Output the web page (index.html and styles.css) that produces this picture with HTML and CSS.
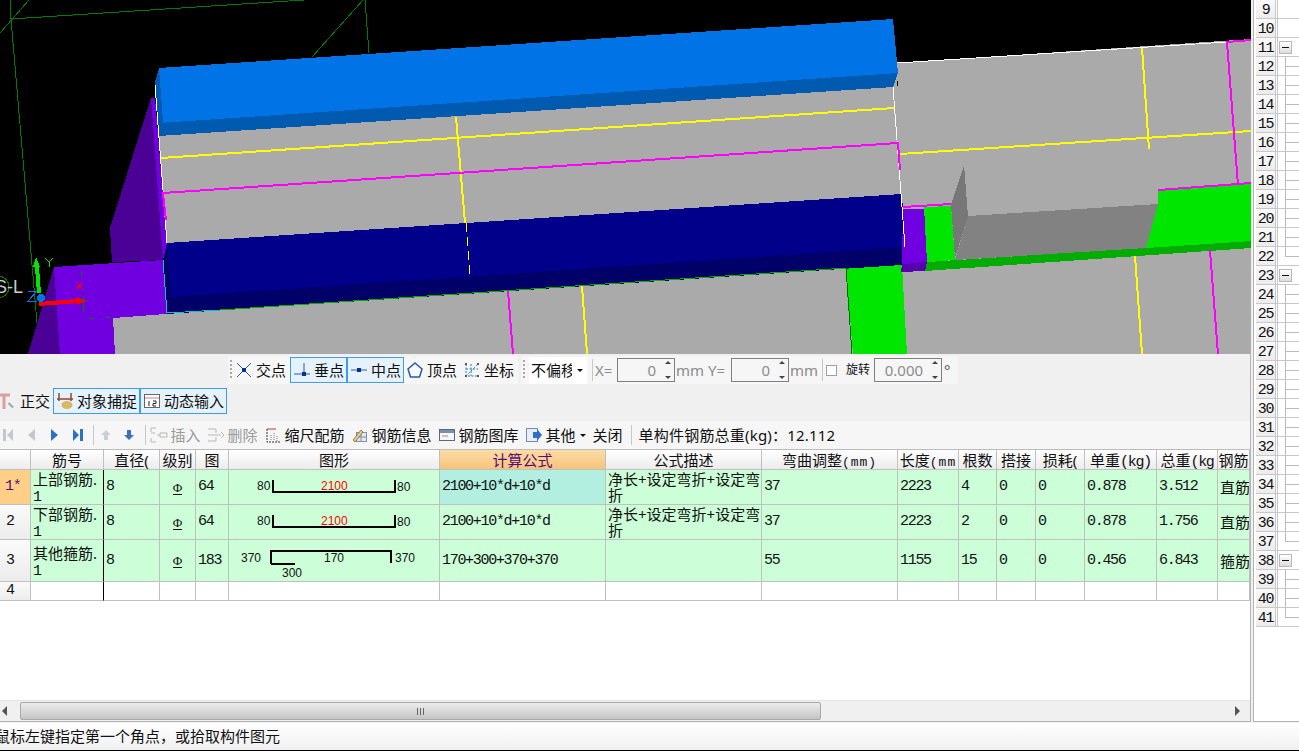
FILE: index.html
```html
<!DOCTYPE html>
<html lang="zh-CN">
<head>
<meta charset="utf-8">
<title>钢筋编辑</title>
<link rel="stylesheet" href="styles.css">
</head>
<body>
<div class="app">
  <main class="left">
    <svg class="view" width="1251" height="354" viewBox="0 0 1251 354" shape-rendering="crispEdges">
      <rect width="1251" height="354" fill="#000"/>
      <g stroke="#007a00" fill="none">
        <path d="M11 19L304 0M10 0L11 19L37 323M29 0L0 33M365 0L369 53M363 0L312 57"/>
        <circle cx="-2" cy="287" r="11"/>
      </g>
      <text x="-5" y="293" class="viewlabel">S-L</text>
      <polygon fill="#4b0096" points="151,98 155,98 167,243 163,260 112,262 110,228"/>
      <polygon fill="#7000e0" points="151,98 155,98 167,243 163,260"/>
      <polygon fill="#4b0096" points="54,267 60,354 28,354"/>
      <polygon fill="#7000e0" points="54,267 163,260 167,314 113,318 115,354 60,354"/>
      <polygon fill="#aaa" points="113,318 166,314 620,283 1251,241 1251,354 115,354"/>
      <polygon fill="#aaa" points="897,63 1251,39 1251,250 903,272"/>
      <polygon fill="#aaa" points="155,85 159,136 893,87 897,73 904,250 167,246"/>
      <polygon fill="#00e600" points="846,268 902,265 907,354 853,354"/>
      <polygon fill="#0073e6" points="159,68 893,19 898,73 163,123"/>
      <polygon fill="#005ab0" points="159,123 898,73 893,87 159,136"/>
      <polygon fill="#005ab0" points="155,82 159,68 163,122 159,136"/>
      <polygon fill="#00008b" points="167,243 902,194 905,247 171,297"/>
      <polygon fill="#000068" points="167,243 171,297 905,247 902,265 167,314 163,260"/>
      <polygon fill="#7000e0" points="903,209 924,209 928,262 902,264"/>
      <polygon fill="#5600ae" points="902,264 928,262 925,271 901,272"/>
      <polygon fill="#00e600" points="924,207 951,206 955,260 927,262"/>
      <polygon fill="#00ad00" points="927,262 1251,241 1251,248 925,271"/>
      <polygon fill="#828282" points="968,216 1158,204 1146,248 955,260"/>
      <polygon fill="#777" points="964,165 968,216 955,258 951,205"/>
      <polygon fill="#00e600" points="1158,190 1251,184 1251,241 1146,248 1158,204"/>
      <g fill="none" stroke-width="1">
        <path stroke="#fff" d="M155 85L167 243M893 87L905 247M897 63L1227 42"/>
        <path stroke="#00c8c8" d="M163 260L167 313L220 310"/>
        <path stroke="#00b000" d="M220 310L620 283L846 268"/>
        <path stroke="#006f00" d="M846 268L852 354"/>
      </g>
      <g fill="none" stroke="#ff0" stroke-width="2">
        <path d="M161 158L894 108M900 154L1251 131M456 117L465 223M1142 48L1149 149M582 286L587 354M1135 256L1142 354"/>
        <path stroke-width="1" stroke-dasharray="9 5" d="M466 223L470 277"/>
      </g>
      <g fill="none" stroke="#ff00ff" stroke-width="2">
        <path d="M166 220L163 193L898 143L900 170M1251 40L1227 42L1238 185M1158 190L1251 183M903 207L951 204M508 291L513 354M1210 250L1218 354"/>
      </g>
      <g fill="none">
        <path stroke="#00e600" stroke-width="4" d="M37 267L39 293"/>
        <polygon fill="#00e600" points="33,267 36,257 40,267"/>
        <path stroke="#ff0000" stroke-width="4" d="M39 304L77 301"/>
        <polygon fill="#ff0000" points="76,297 87,301 76,305"/>
        <circle cx="41" cy="298" r="4" fill="#0073e6"/>
        <path stroke="#0073e6" d="M28 291H37L28 301H37"/>
        <path stroke="#00e600" d="M45 258L49 262L53 258M49 262V267"/>
        <path stroke="#ff0000" d="M76 282L83 290M83 282L76 290"/>
        <path stroke="#007a00" d="M81 272V276M83 296V312M89 318H94M106 317H110"/>
      </g>
    </svg>

    <section class="snap-area">
      <div class="bars-a">
        <div class="bar">
          <span class="grip"></span>
          <span class="tool tool-plain tool-first">
            <svg class="ic" width="18" height="18" viewBox="0 0 18 18"><path d="M2 2L16 16M16 2L2 16" stroke="#2c5aa0" fill="none"/><rect x="7" y="7" width="4" height="4" fill="#00339a"/></svg>
            交点
          </span>
          <span class="tool tool-on tool-snap">
            <svg class="ic" width="18" height="18" viewBox="0 0 18 18"><path d="M11 2V15M1 13H17" stroke="#2c5aa0" fill="none"/><rect x="9" y="11" width="4" height="4" fill="#00339a"/></svg>
            垂点
          </span>
          <span class="tool tool-on tool-snap">
            <svg class="ic" width="18" height="18" viewBox="0 0 18 18"><path d="M1 9H17" stroke="#2c5aa0" fill="none"/><rect x="7" y="7" width="4" height="4" fill="#00339a"/></svg>
            中点
          </span>
          <span class="tool tool-plain tool-tight">
            <svg class="ic" width="18" height="18" viewBox="0 0 18 18"><path d="M9 2L16 8L13.500 16H4.500L2 8Z" stroke="#2c5aa0" stroke-width="1.500" fill="#f6fbff"/></svg>
            顶点
          </span>
          <span class="tool tool-plain tool-tight">
            <svg class="ic" width="18" height="18" viewBox="0 0 18 18"><path d="M3 3V15H16M3 15L15 3M8 3V15M3 8H15" stroke="#2c7ac0" stroke-dasharray="2 1.500" fill="none"/><path d="M2 2h2v2h-2zM14 2h2v2h-2zM2 14h2v2h-2zM14 14h2v2h-2z" fill="#555"/></svg>
            坐标
          </span>
        </div>
        <div class="bar bar-input">
          <span class="grip grip-wide"></span>
          <span class="combo"><span class="combo-text">不偏移</span><span class="caret"></span></span>
          <span class="sep"></span>
          <span class="dim label-x">X=</span>
          <span class="spin"><span class="spin-val">0</span><span class="spin-arrows"><i class="up"></i><i class="down"></i></span></span>
          <span class="dim label-y">mm Y=</span>
          <span class="spin"><span class="spin-val">0</span><span class="spin-arrows"><i class="up"></i><i class="down"></i></span></span>
          <span class="dim label-mm">mm</span>
          <span class="sep"></span>
          <span class="check"></span>
          <span class="rotate">旋转</span>
          <span class="spin spin-wide"><span class="spin-val">0.000</span><span class="spin-arrows"><i class="up"></i><i class="down"></i></span></span>
          <span class="deg">°</span>
        </div>
      </div>
      <div class="bars-b">
        <span class="mode mode-plain">
          <svg class="ic" width="18" height="18" viewBox="0 0 18 18"><path d="M0 3H10M4 3V17" stroke="#d8a0a0" stroke-width="3" fill="none"/><path d="M9 10L14 15L12 16L8 12Z" fill="#9aa8b8"/></svg>
          正交
        </span>
        <span class="mode mode-on">
          <svg class="ic" width="18" height="18" viewBox="0 0 18 18"><path d="M3 1V9M15 1V9M1 7H17" stroke="#8a4a30" stroke-width="1.500" fill="none"/><ellipse cx="11" cy="13" rx="5.500" ry="4" fill="#d8b860"/></svg>
          对象捕捉
        </span>
        <span class="mode mode-on">
          <svg class="ic" width="18" height="18" viewBox="0 0 18 18"><rect x="1.500" y="2.500" width="15" height="13" fill="#fff" stroke="#666"/><path d="M2 6H16" stroke="#c08080"/><path d="M6 9V14M10 9H13V11.500H10V14H13" stroke="#222" fill="none"/></svg>
          动态输入
        </span>
      </div>
    </section>

    <nav class="tb">
      <span class="nav"><svg width="10" height="12" viewBox="0 0 10 12"><path d="M0 0H3V12H0ZM10 0V12L4 6Z" fill="#c4c8cc"/></svg></span>
      <span class="nav"><svg width="8" height="12" viewBox="0 0 8 12"><path d="M8 0V12L1 6Z" fill="#c4c8cc"/></svg></span>
      <span class="nav"><svg width="8" height="12" viewBox="0 0 8 12"><path d="M0 0V12L7 6Z" fill="#2f6fc8"/></svg></span>
      <span class="nav"><svg width="10" height="12" viewBox="0 0 10 12"><path d="M0 0V12L6 6ZM7 0H10V12H7Z" fill="#2f6fc8"/></svg></span>
      <span class="tb-sep tb-sep-a"></span>
      <span class="nav"><svg width="10" height="10" viewBox="0 0 10 10"><path d="M5 0L10 5H7V10H3V5H0Z" fill="#ccd0d4"/></svg></span>
      <span class="nav"><svg width="10" height="10" viewBox="0 0 10 10"><path d="M5 10L10 5H7V0H3V5H0Z" fill="#3a70c0"/></svg></span>
      <span class="tb-sep tb-sep-b"></span>
      <span class="act act-off act-first">
        <svg class="ic" width="18" height="16" viewBox="0 0 18 16"><path d="M1 1H6M1 1V5M1 11V15H6M1 6H5M7 8H10M10 6H17V10H10Z" stroke="#b8b8b8" fill="none"/></svg>
        插入
      </span>
      <span class="act act-off">
        <svg class="ic" width="18" height="16" viewBox="0 0 18 16"><path d="M1 2H9V6M1 14H9V10M1 8H14M14 5L17 8L14 11" stroke="#b8b8b8" fill="none"/></svg>
        删除
      </span>
      <span class="act">
        <svg class="ic" width="18" height="16" viewBox="0 0 18 16"><path d="M3 2V15H16" stroke="#333" stroke-dasharray="2 1" fill="none"/><path d="M3 2H12" stroke="#c04030"/><path d="M7 8V14M10 6V14M13 9V14" stroke="#777" stroke-dasharray="1 1"/></svg>
        缩尺配筋
      </span>
      <span class="act">
        <svg class="ic" width="18" height="16" viewBox="0 0 18 16"><rect x="5.500" y="5.500" width="10" height="9" fill="#e4e8f0" stroke="#8090a8"/><path d="M10 6V14M6 10H15" stroke="#8090a8"/><path d="M2 13L10 3L12 5L4 15Z" fill="#e8d090" stroke="#705020" stroke-width=".7"/></svg>
        钢筋信息
      </span>
      <span class="act">
        <svg class="ic" width="18" height="16" viewBox="0 0 18 16"><rect x="1.500" y="2.500" width="15" height="11" fill="#f4f6fa" stroke="#5a6a80"/><path d="M2 3H16V6H2Z" fill="#7a90b0"/><path d="M4 9H10" stroke="#c09040"/></svg>
        钢筋图库
      </span>
      <span class="act">
        <svg class="ic" width="18" height="16" viewBox="0 0 18 16"><rect x="1.500" y="1.500" width="11" height="13" fill="#e8eef6" stroke="#7a8aa0"/><path d="M8 5H12V2L17 8L12 14V11H8Z" fill="#2f6fc8"/></svg>
        其他<span class="caret caret-more"></span>
      </span>
      <span class="act act-close">关闭</span>
      <span class="tb-sep tb-sep-total"></span>
      <span class="total">单构件钢筋总重(kg)：12.112</span>
    </nav>

    <div class="table-wrap">
      <table class="grid">
        <colgroup>
          <col class="c0"><col class="c1"><col class="c2"><col class="c3"><col class="c4"><col class="c5"><col class="c6"><col class="c7"><col class="c8"><col class="c9"><col class="c10"><col class="c11"><col class="c12"><col class="c13"><col class="c14"><col class="c15">
        </colgroup>
        <thead>
          <tr>
            <th></th><th>筋号</th><th>直径(</th><th>级别</th><th>图</th><th>图形</th><th class="hot">计算公式</th><th>公式描述</th>
            <th>弯曲调整<span class="lat lat-mm">(mm)</span></th><th>长度<span class="lat lat-mm">(mm</span></th><th>根数</th><th>搭接</th><th>损耗(</th><th>单重<span class="lat">(kg)</span></th><th>总重<span class="lat">(kg</span></th><th>钢筋</th>
          </tr>
        </thead>
        <tbody>
          <tr class="r1">
            <th class="rowhead rowhead-on">1*</th><td class="freeze">上部钢筋.<br><span class="lat">1</span></td><td class="n">8</td><td class="g"><span class="grade">Φ</span></td><td class="n">64</td>
            <td class="shape"><svg width="210" height="34" viewBox="0 0 210 34" class="shape-svg"><path d="M44 10V22H166V10" class="bar-line"/><text x="28" y="20" class="dimtxt">80</text><text x="92" y="20" class="dimtxt red">2100</text><text x="168" y="21" class="dimtxt">80</text></svg></td>
            <td class="n formula-on">2100+10*d+10*d</td><td>净长+设定弯折+设定弯<br>折</td><td class="n">37</td><td class="n">2223</td><td class="n">4</td><td class="n">0</td><td class="n">0</td><td class="n">0.878</td><td class="n">3.512</td><td>直筋</td>
          </tr>
          <tr class="r2">
            <th class="rowhead">2</th><td class="freeze">下部钢筋.<br><span class="lat">1</span></td><td class="n">8</td><td class="g"><span class="grade">Φ</span></td><td class="n">64</td>
            <td class="shape"><svg width="210" height="34" viewBox="0 0 210 34" class="shape-svg"><path d="M44 10V22H166V10" class="bar-line"/><text x="28" y="20" class="dimtxt">80</text><text x="92" y="20" class="dimtxt red">2100</text><text x="168" y="21" class="dimtxt">80</text></svg></td>
            <td class="n">2100+10*d+10*d</td><td>净长+设定弯折+设定弯<br>折</td><td class="n">37</td><td class="n">2223</td><td class="n">2</td><td class="n">0</td><td class="n">0</td><td class="n">0.878</td><td class="n">1.756</td><td>直筋</td>
          </tr>
          <tr class="r3">
            <th class="rowhead">3</th><td class="freeze">其他箍筋.<br><span class="lat">1</span></td><td class="n">8</td><td class="g"><span class="grade">Φ</span></td><td class="n">183</td>
            <td class="shape"><svg width="210" height="41" viewBox="0 0 210 41" class="shape-svg"><path d="M42 24V11H162V23M42 24H66" class="bar-line"/><text x="12" y="22" class="dimtxt">370</text><text x="95" y="22" class="dimtxt">170</text><text x="166" y="22" class="dimtxt">370</text><text x="53" y="37" class="dimtxt">300</text></svg></td>
            <td class="n">170+300+370+370</td><td></td><td class="n">55</td><td class="n">1155</td><td class="n">15</td><td class="n">0</td><td class="n">0</td><td class="n">0.456</td><td class="n">6.843</td><td>箍筋</td>
          </tr>
          <tr class="r4">
            <th class="rowhead">4</th><td class="freeze"></td><td></td><td></td><td></td><td></td><td></td><td></td><td></td><td></td><td></td><td></td><td></td><td></td><td></td><td></td>
          </tr>
        </tbody>
      </table>
    </div>

    <div class="hscroll">
      <span class="arrow-l"></span>
      <span class="thumb"><span class="thumb-grip"></span></span>
      <span class="track"></span>
      <span class="arrow-r"></span>
    </div>
  </main>

  <aside class="tree">
    <div class="tr"><span class="no">9</span><span class="tc dot-blue"></span></div>
    <div class="tr"><span class="no">10</span><span class="tc dot"></span></div>
    <div class="tr"><span class="no">11</span><span class="tc dot"><span class="exp"></span></span></div>
    <div class="tr"><span class="no">12</span><span class="tc k"></span></div>
    <div class="tr"><span class="no">13</span><span class="tc k"></span></div>
    <div class="tr"><span class="no">14</span><span class="tc k"></span></div>
    <div class="tr"><span class="no">15</span><span class="tc k"></span></div>
    <div class="tr"><span class="no">16</span><span class="tc k"></span></div>
    <div class="tr"><span class="no">17</span><span class="tc k"></span></div>
    <div class="tr"><span class="no">18</span><span class="tc k"></span></div>
    <div class="tr"><span class="no">19</span><span class="tc k"></span></div>
    <div class="tr"><span class="no">20</span><span class="tc k"></span></div>
    <div class="tr"><span class="no">21</span><span class="tc k"></span></div>
    <div class="tr"><span class="no">22</span><span class="tc k end"></span></div>
    <div class="tr"><span class="no">23</span><span class="tc dot"><span class="exp"></span></span></div>
    <div class="tr"><span class="no">24</span><span class="tc k"></span></div>
    <div class="tr"><span class="no">25</span><span class="tc k"></span></div>
    <div class="tr"><span class="no">26</span><span class="tc k"></span></div>
    <div class="tr"><span class="no">27</span><span class="tc k"></span></div>
    <div class="tr"><span class="no">28</span><span class="tc k"></span></div>
    <div class="tr"><span class="no">29</span><span class="tc k"></span></div>
    <div class="tr"><span class="no">30</span><span class="tc k"></span></div>
    <div class="tr"><span class="no">31</span><span class="tc k"></span></div>
    <div class="tr"><span class="no">32</span><span class="tc k"></span></div>
    <div class="tr"><span class="no">33</span><span class="tc k"></span></div>
    <div class="tr"><span class="no">34</span><span class="tc k"></span></div>
    <div class="tr"><span class="no">35</span><span class="tc k"></span></div>
    <div class="tr"><span class="no">36</span><span class="tc k"></span></div>
    <div class="tr"><span class="no">37</span><span class="tc k end"></span></div>
    <div class="tr"><span class="no">38</span><span class="tc dot"><span class="exp"></span></span></div>
    <div class="tr"><span class="no">39</span><span class="tc k"></span></div>
    <div class="tr"><span class="no">40</span><span class="tc k"></span></div>
    <div class="tr"><span class="no">41</span><span class="tc k end"></span></div>
  </aside>
</div>
<footer class="status"><span class="status-text">鼠标左键指定第一个角点，或拾取构件图元</span></footer>
</body>
</html>
```

FILE: styles.css
```css
* { box-sizing: border-box; }
html, body { margin: 0; padding: 0; }
body {
  width: 1299px;
  height: 751px;
  overflow: hidden;
  background: #f0f0f0;
  color: #111;
  font-family: "Noto Sans", "Noto Sans CJK SC", sans-serif;
  font-size: 15px;
  line-height: 20px;
}
.app { display: grid; grid-template-columns: 1251px 48px; height: 723px; }
.left { display: flex; flex-direction: column; width: 1251px; height: 722px; border-bottom: 1px solid #b4b4b4; border-right: 1px solid #b4b4b4; }
.view { display: block; flex: none; margin-right: -1px; }
.viewlabel { font: 18px "Liberation Sans", sans-serif; fill: #ccc; }
.ic { flex: none; display: block; }

.snap-area { flex: none; height: 67px; background: #f0f0f0; }
.bars-a { display: flex; height: 34px; padding: 2px 0 0 228px; gap: 3px; }
.bar { display: flex; align-items: center; height: 28px; background: #f6f6f6; }
.grip { width: 2px; height: 20px; margin: 0 2px 0 2px; background: repeating-linear-gradient(#a8a8a8 0 2px, transparent 2px 4px); }
.grip-wide { margin-right: 4px; }
.tool { display: flex; align-items: center; height: 26px; gap: 3px; white-space: nowrap; border: 1px solid transparent; }
.tool-plain { padding: 0 3px 0 2px; }
.tool-first { padding-left: 0; }
.tool-tight { padding-left: 1px; }
.tool-on { background: #e5f1fb; border-color: #3d9cf0; }
.tool-snap { width: 57px; padding-left: 2px; }
.bar-input { padding-right: 8px; }
.combo { display: flex; align-items: center; width: 58px; height: 27px; background: #fff; padding-left: 2px; }
.combo-text { width: 41px; flex: none; overflow: hidden; white-space: nowrap; }
.caret { width: 0; height: 0; margin-left: 5px; border: 3px solid transparent; border-top: 3px solid #111; border-bottom: 0; }
.sep { width: 1px; height: 22px; margin: 0 2px 0 5px; background: #c8c8c8; }
.dim { color: #8c8c8c; white-space: nowrap; }
.label-x { width: 22px; }
.label-y { width: 56px; padding-left: 1px; }
.label-mm { width: 28px; padding-left: 1px; }
.spin { display: flex; align-items: center; width: 58px; height: 24px; background: #f6f6f6; border: 1px solid #808080; }
.spin-wide { width: 68px; }
.spin-val { flex: 1; text-align: right; color: #8c8c8c; padding-right: 6px; }
.spin-arrows { display: flex; flex-direction: column; justify-content: space-between; width: 12px; height: 18px; align-items: center; }
.spin-arrows i { width: 0; height: 0; border: 3px solid transparent; }
.spin-arrows .up { border-top: 0; border-bottom: 3px solid #444; }
.spin-arrows .down { border-bottom: 0; border-top: 3px solid #444; }
.check { width: 11px; height: 11px; margin-left: 1px; border: 1px solid #a0a0a0; background: #fff; }
.rotate { width: 28px; margin-left: 9px; font-size: 12px; white-space: nowrap; }
.deg { margin-left: 2px; color: #555; }

.bars-b { display: flex; height: 26px; }
.mode { display: flex; align-items: center; gap: 3px; height: 26px; white-space: nowrap; border: 1px solid transparent; }
.mode-plain { width: 54px; margin-left: -1px; gap: 2px; }
.mode-on { width: 87px; padding-left: 2px; background: #e5f1fb; border-color: #3d9cf0; }

.tb { flex: none; display: flex; align-items: center; height: 28px; background: #f6f6f6; white-space: nowrap; overflow: hidden; }
.nav { display: flex; justify-content: center; align-items: center; width: 23.500px; flex: none; }
.nav:first-child { margin-left: -4px; }
.tb-sep { width: 1px; height: 20px; background: #c8c8c8; flex: none; }
.tb-sep-a { margin: 0 0 0 3px; }
.tb-sep-b { margin: 0 4px 0 3.500px; }
.tb-sep-total { margin: 0 7px 0 8px; }
.act { display: flex; align-items: center; gap: 3px; margin-left: 6px; flex: none; }
.act-first { margin-left: 0; }
.act-off { color: #9a9a9a; }
.caret-more { margin-left: 1px; }
.act-close { margin-left: 7px; }
.total { flex: none; letter-spacing: .2px; }

.table-wrap { flex: 1; min-height: 0; background: #fff; border-top: 1px solid #bcbcbc; overflow: hidden; }
.grid { width: 1250px; table-layout: fixed; border-collapse: separate; border-spacing: 0; font-size: 15px; line-height: 16px; }
.c0 { width: 31px; } .c1 { width: 73px; } .c2 { width: 56px; } .c3 { width: 36px; }
.c4 { width: 33px; } .c5 { width: 211px; } .c6 { width: 166px; } .c7 { width: 156px; }
.c8 { width: 136px; } .c9 { width: 61px; } .c10 { width: 38px; } .c11 { width: 39px; }
.c12 { width: 49px; } .c13 { width: 72px; } .c14 { width: 61px; } .c15 { width: 32px; }
.grid th, .grid td { border-right: 1px solid #c0c0c0; border-bottom: 1px solid #c0c0c0; padding: 0; overflow: hidden; white-space: nowrap; font-weight: 400; }
.grid thead th { height: 20px; text-align: center; background: linear-gradient(#fff, #ececec); }
.grid thead .hot { background: linear-gradient(#fbdca8, #f6c478); color: #5a0a7a; }
.r1, .r2 { height: 35px; }
.r3 { height: 42px; }
.r4 { height: 19px; }
.grid tbody td { padding-left: 2px; background: #ccffd8; }
.grid .r4 td { background: #fff; }
.grid .rowhead { background: linear-gradient(#fafafa, #ececec); font: 15px/16px "Liberation Mono", monospace; letter-spacing: -1.300px; text-align: left; padding-left: 6px; }
.grid .rowhead-on { background: #ffcf88; color: #5a0a7a; padding-left: 5px; }
.grid td.freeze { border-right-color: #000; }
.grid .n { font: 15px/16px "Liberation Mono", monospace; letter-spacing: -1.300px; }
.grid td.formula-on { background: #b2efe0; }
.lat { font: 15px/10px "Liberation Mono", monospace; letter-spacing: -1.300px; }
.lat-mm { letter-spacing: 1px; font-size: 13px; }
.grid td.g { padding: 0; text-align: center; }
.grade { position: relative; display: inline-block; padding-bottom: 2px; font: 13px/14px "Liberation Serif", serif; }
.grade::after { content: ""; position: absolute; left: 0; right: 0; bottom: 2px; height: 1px; background: #111; }
.grid td.shape { padding: 0; }
.shape-svg { display: block; }
.bar-line { fill: none; stroke: #000; stroke-width: 2; shape-rendering: crispEdges; }
.dimtxt { font: 12px "Liberation Sans", sans-serif; fill: #111; }
.dimtxt.red { fill: #f00; }

.hscroll { flex: none; display: flex; align-items: center; height: 21px; background: #f0f0f0; border-top: 1px solid #e4e4e4; }
.arrow-l, .arrow-r { width: 0; height: 0; flex: none; border: 5px solid transparent; }
.arrow-l { margin: 0 6px 0 2px; border-left: 0; border-right: 5px solid #555; }
.thumb { display: flex; justify-content: center; align-items: center; flex: none; width: 801px; height: 18px; margin-left: 7px; background: linear-gradient(#ececec, #c4c4c4); border: 1px solid #a8a8a8; border-radius: 2px; }
.thumb-grip { width: 8px; height: 7px; background: repeating-linear-gradient(90deg, #666 0 1px, transparent 1px 3px); }
.track { flex: 1; }
.arrow-r { margin-right: 10px; border-right: 0; border-left: 5px solid #555; }

.tree { margin-left: 2px; height: 722px; border-left: 1px solid #b4b4b4; border-bottom: 1px solid #b4b4b4; background: #fff; padding-left: 2px; overflow: hidden; }
.tr { display: flex; height: 19px; width: 44px; border-bottom: 1px solid #c8c8c8; }
.no { flex: none; width: 20px; margin-right: 1px; padding-top: 1px; background: linear-gradient(#fafafa, #ececec); border-right: 1px solid #c8c8c8; font: 15px/19px "Liberation Mono", monospace; letter-spacing: -1.300px; text-align: center; }
.tc { position: relative; flex: 1; border-left: 1px solid #c8c8c8; }
.k::before { content: ""; position: absolute; left: 7px; top: -1px; bottom: -1px; width: 1px; background: #bbb; }
.k::after { content: ""; position: absolute; left: 7px; right: 0; top: 9px; height: 1px; background: #bbb; }
.k.end::before { bottom: 9px; }
.exp { position: absolute; left: 1px; top: 3px; width: 13px; height: 13px; background: linear-gradient(#fff, #ddd); border: 1px solid #b8b8b8; }
.exp::after { content: ""; position: absolute; left: 2px; right: 2px; top: 5px; height: 1px; background: #111; }
.dot::after, .dot-blue::after { content: ""; position: absolute; right: 0; top: 9px; width: 1px; height: 2px; background: #000; }
.dot-blue::after { top: 12px; background: #00c; }

.status { height: 28px; background: linear-gradient(#fff, #f0f0f0); border-bottom: 1px solid #000; padding-top: 3px; overflow: hidden; white-space: nowrap; }
.status-text { display: block; margin-left: -5px; }
```
